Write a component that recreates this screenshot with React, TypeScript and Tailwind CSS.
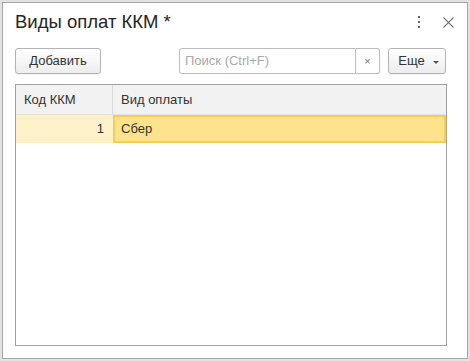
import React from "react";

function DotsIcon() {
  return (
    <svg width="4" height="12" viewBox="0 0 4 12" className="block">
      <rect x="1" y="0" width="2" height="2" fill="#666" />
      <rect x="1" y="5" width="2" height="2" fill="#666" />
      <rect x="1" y="10" width="2" height="2" fill="#666" />
    </svg>
  );
}

function CloseIcon() {
  return (
    <svg width="11" height="11" viewBox="0 0 11 11" className="block">
      <path d="M0.5 0.5 L10.5 10.5 M10.5 0.5 L0.5 10.5" stroke="#777" strokeWidth="1.1" fill="none" />
    </svg>
  );
}

const btn =
  "h-[26px] flex items-center justify-center rounded-[3px] border border-[#b4b4b4] bg-gradient-to-b from-white to-[#ededed] text-[13px] text-[#333] shadow-[0_1px_0_rgba(0,0,0,0.06)]";

export default function App() {
  return (
    <div
      className="w-[470px] h-[361px] bg-[#e2e2e2] p-[2px]"
      style={{ fontFamily: '"Liberation Sans", Arial, sans-serif' }}
    >
      <div className="h-full border border-[#a6a6a6] bg-white flex flex-col pl-[12px]">
        {/* title */}
        <div className="flex items-center pt-[8px] pr-[9px]">
          <div className="flex-1 text-[18.5px] leading-[22px] text-[#262626]">Виды оплат ККМ *</div>
          <div className="w-[20px] flex justify-center">
            <DotsIcon />
          </div>
          <div className="w-[20px] ml-[9px] flex justify-center">
            <CloseIcon />
          </div>
        </div>

        {/* toolbar */}
        <div className="w-[431px] mt-[15px] flex items-center justify-between">
          <div className={`${btn} w-[86px]`}>Добавить</div>
          <div className="flex items-center">
            <div className="w-[177px] h-[26px] flex items-center border border-[#bcbcbc] rounded-l-[3px] pl-[5px] text-[13px] text-[#a9a9a9]">
              Поиск (Ctrl+F)
            </div>
            <div className="w-[24px] h-[26px] flex items-center justify-center border-y border-r border-[#bcbcbc] rounded-r-[3px] text-[11px] text-[#777]">
              ×
            </div>
            <div className={`${btn} w-[58px] ml-[8px] gap-[8px] pl-[3px]`}>
              <span>Еще</span>
              <span className="w-0 h-0 border-x-[3px] border-x-transparent border-t-[3px] border-t-[#555] mt-[2px]" />
            </div>
          </div>
        </div>

        {/* table */}
        <div className="w-[432px] h-[262px] mt-[10px] border border-[#a0a0a0] flex flex-col text-[13px] text-[#333]">
          <div className="h-[30px] flex bg-[#f2f2f2] border-b border-[#e2e2e2]">
            <div className="w-[97px] border-r border-[#dadada] flex items-center pl-[8px]">Код ККМ</div>
            <div className="flex-1 flex items-center pl-[8px]">Вид оплаты</div>
          </div>
          <div className="h-[28px] flex">
            <div className="w-[97px] bg-[#fcf1c8] flex items-center justify-end pr-[9px]">1</div>
            <div className="flex-1 bg-[#fde38c] border-2 border-[#f4cf50] flex items-center pl-[6px]">Сбер</div>
          </div>
        </div>
      </div>
    </div>
  );
}
